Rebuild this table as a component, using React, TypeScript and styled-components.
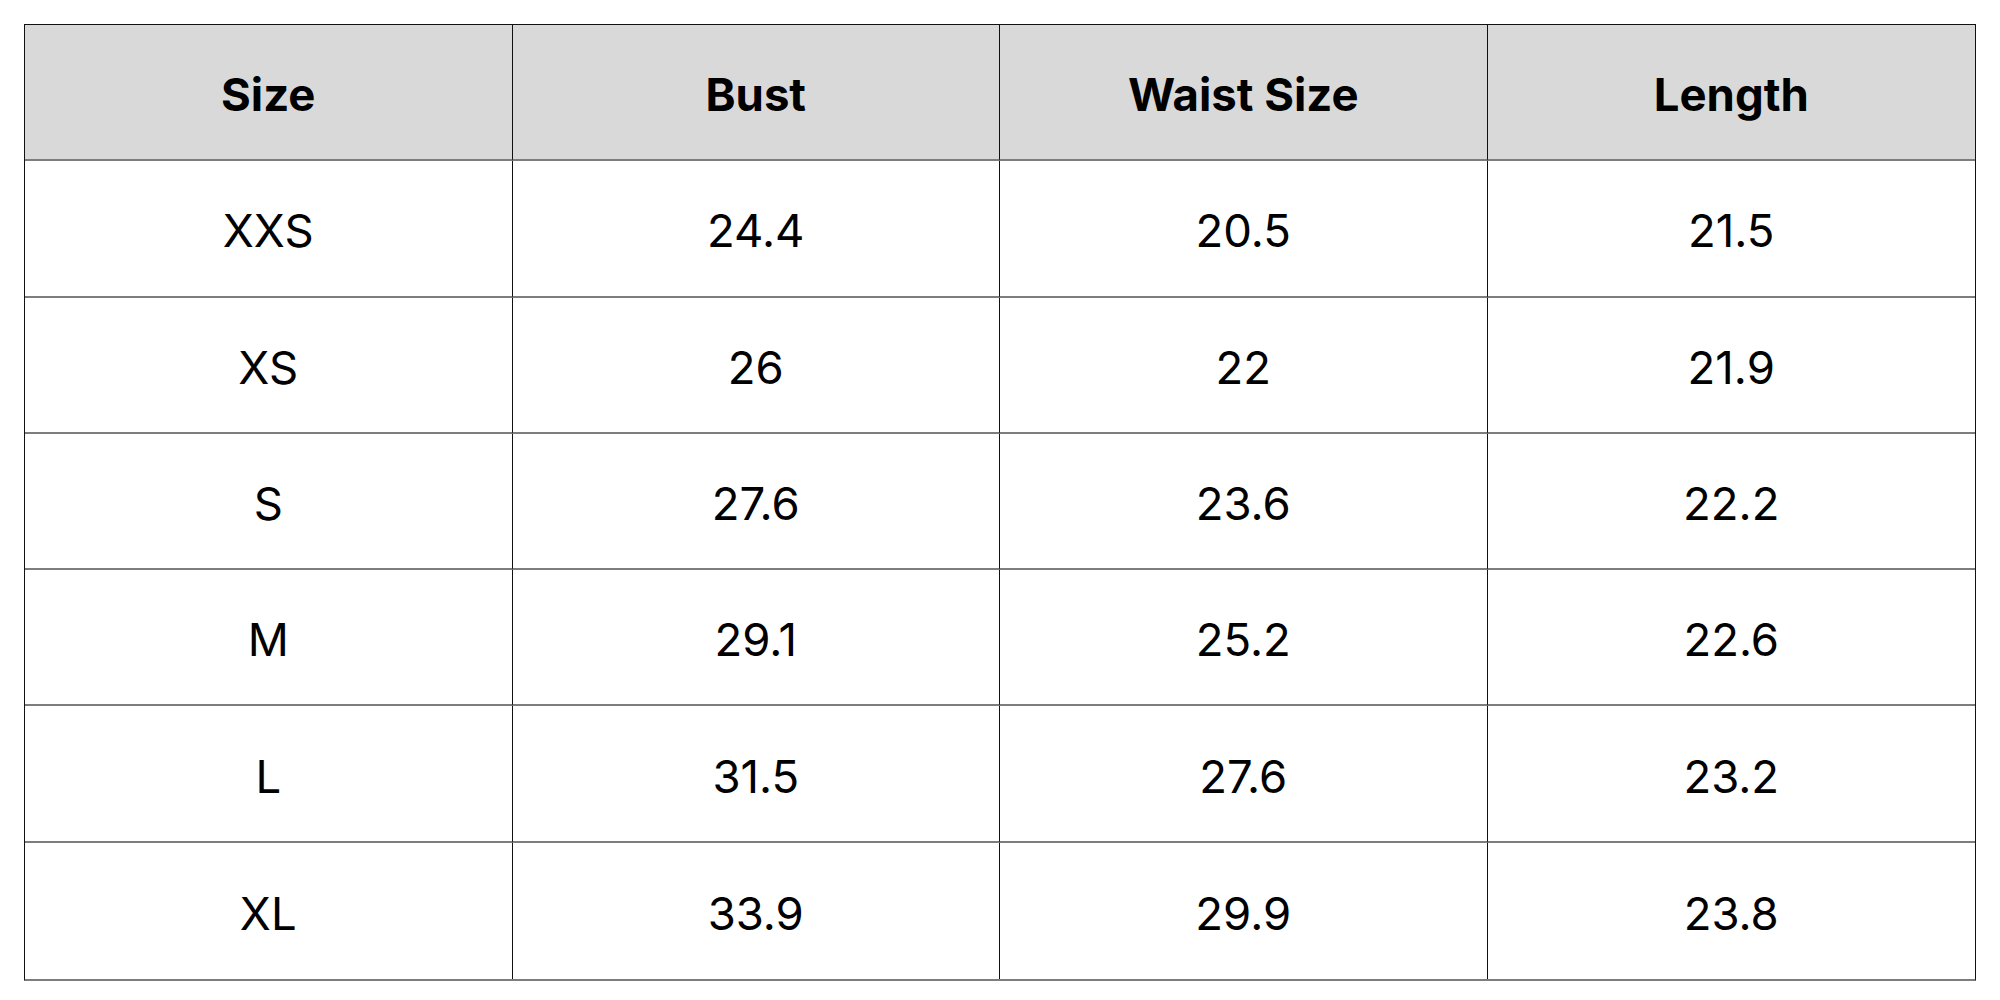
import React from "react";
import styled, { createGlobalStyle } from "styled-components";

const GlobalStyle = createGlobalStyle`
  html, body { margin: 0; padding: 0; background: #ffffff; }
  body { font-family: Inter, "Liberation Sans", sans-serif; color: #000; }
`;

const Page = styled.div`
  padding: 24px;
`;

const Table = styled.div`
  width: 1952px;
  height: 957px;
  box-sizing: border-box;
  display: grid;
  grid-template-columns: repeat(4, 1fr);
  grid-template-rows: repeat(7, 1fr);
  border-top: 1px solid #111;
  border-left: 1px solid #111;
  border-right: 1px solid #111;
  border-bottom: 2px solid #7d7d7d;
`;

const Cell = styled.div<{ $head?: boolean; $last?: boolean; $lastRow?: boolean }>`
  display: flex;
  align-items: center;
  justify-content: center;
  padding-top: 5px;
  background: ${(p) => (p.$head ? "#d9d9d9" : "#ffffff")};
  font-size: 45.5px;
  font-weight: ${(p) => (p.$head ? 700 : 400)};
  border-right: ${(p) => (p.$last ? "none" : "1px solid #111")};
  border-bottom: ${(p) => (p.$lastRow ? "none" : "2px solid #7d7d7d")};
`;

const headers = ["Size", "Bust", "Waist Size", "Length"];
const rows = [
  ["XXS", "24.4", "20.5", "21.5"],
  ["XS", "26", "22", "21.9"],
  ["S", "27.6", "23.6", "22.2"],
  ["M", "29.1", "25.2", "22.6"],
  ["L", "31.5", "27.6", "23.2"],
  ["XL", "33.9", "29.9", "23.8"],
];

export default function App() {
  return (
    <Page>
      <GlobalStyle />
      <Table>
        {headers.map((h, i) => (
          <Cell key={h} $head $last={i === 3}>
            {h}
          </Cell>
        ))}
        {rows.map((r, ri) =>
          r.map((v, ci) => (
            <Cell key={`${ri}-${ci}`} $last={ci === 3} $lastRow={ri === rows.length - 1}>
              {v}
            </Cell>
          ))
        )}
      </Table>
    </Page>
  );
}
